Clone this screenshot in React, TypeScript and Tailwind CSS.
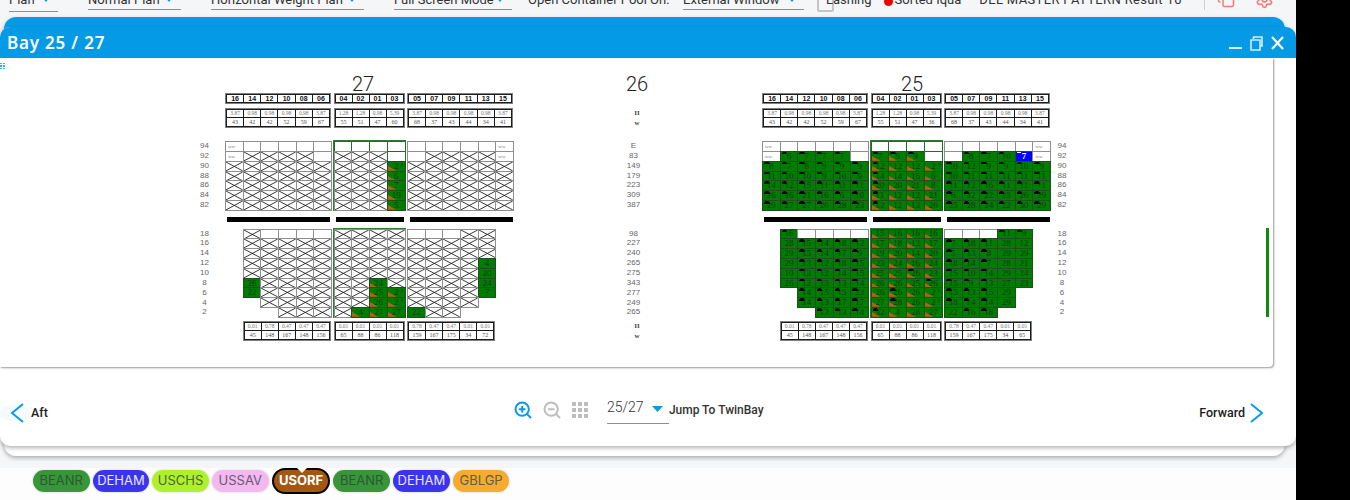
import React from 'react';
import { Copy, Settings, ZoomIn, ZoomOut } from 'lucide-react';

const roboto = 'font-["Roboto",sans-serif]';

const headers = ['16 14 12 10 08 06', '04 02 01 03', '05 07 09 11 13 15'];
const topWeights = ['3.87 0.98 0.98 0.98 0.98 3.87', '1.28 1.28 0.98 5.39', '3.87 0.98 0.98 0.98 0.98 3.87'];
const bottomWeights = ['0.01 0.78 0.47 0.47 0.47', '0.01 0.01 0.01 0.01', '0.78 0.47 0.47 0.01 0.01'];

// x = crossed, e = empty, n = no slot, w = ww, number + flags: t triangle, m mark, b blue, k corner K
const bay27 = {
  top: ['43 42 42 52 59 67', '55 51 47 60', '68 37 43 44 34 41'],
  bottom: ['45 148 167 148 156', '65 88 86 118', '159 167 175 34 72'],
  upper: [
    ['w e e e e e', 'w x x x x e', 'x x x x x x', 'x x x x x x', 'x x x x x x', 'x x x x x x', 'x x x x x x'],
    ['e e e e', 'x x x e', 'x x x 2tk', 'x x x 6t', 'x x x 7t', 'x x x 19t', 'x x x 5t'],
    ['e e e e e w', 'e x x x x w', 'x x x x x x', 'x x x x x x', 'x x x x x x', 'x x x x x x', 'x x x x x x'],
  ],
  lower: [
    ['x e e e e', 'x x x x x', 'x x x x x', 'x x x x x', 'x x x x x', '26 x x x x', '22 x x x x', 'n x x x x', 'n n x x x'],
    ['x x x x', 'x x x x', 'x x x x', 'x x x x', 'x x x x', 'x x 24t x', 'x x 25t 2tk', 'x x 26t 2tk', 'x 4t 27t 27t'],
    ['e e e x x', 'x x x x x', 'x x x x x', 'x x x x 4', 'x x x x 20', 'x x x x 24', 'x x x x 7', 'x x x x n', '22 x x n n'],
  ],
};

const bay25 = {
  top: ['43 42 42 52 59 67', '55 51 47 36', '68 37 43 44 34 41'],
  bottom: ['45 148 167 148 156', '65 88 86 118', '159 167 175 34 65'],
  upper: [
    [
      'w e e e e e',
      'w 6m 7m 7m 7m e',
      '8m 7m 8m 9m 9m 9m',
      '11m 10m 10m 9m 10m 9m',
      '14m 12m 15m 11m 11m 11m',
      '26m 26m 21m 16m 6m 10m',
      '29m 27m 27m 26m 28m 23m',
    ],
    ['e e e e', '7tm 9tm 9tm e', '12tm 12t 12t 2tk', '14tm 14t 15t 6t', '20tm 20t 21t 8t', '11tm 12t 12t 21t', '12tm 12t 13t 26t'],
    [
      'e e e e e w',
      'e 8m 7m 10m 7b w',
      '10m 12m 9m 9m 10m 9m',
      '10m 11m 11m 11m 11m 11m',
      '11m 12m 16m 11m 11m 11m',
      '6m 22m 22m 23m 26m 29m',
      '25m 28m 24m 22m 30m 29m',
    ],
  ],
  lower: [
    [
      '16m e e e e',
      '28 15m 14m 18m 12m',
      '29 15m 14m 17m 9m',
      '29 13m 12m 18m 15m',
      '10 13m 12m 14m 15m',
      '26 12m 13m 13m 14m',
      'n 14m 15m 15m 23m',
      'n 14m 13m 17m 17m',
      'n n 13m 13m 14m',
    ],
    [
      '15t 16t 16t 16t',
      '17t 18t 12t 17t',
      '19t 20t 14t 20t',
      '23t 24t 16t 24t',
      '25t 25t 26tm 23t',
      '26t 26t 25t 26tm',
      '26t 26tm 26t 2tk',
      '27t 28tm 26t 2tk',
      '32tm 4t 28t 27t',
    ],
    [
      'e e e 11m 9m',
      '7m 18m 11m 28 12',
      '5m 13m 8m 29 29',
      '18m 14m 7m 28 21',
      '15m 10m 14m 29 24',
      '15m 9m 13m 27 23',
      '15m 13m 15m 29 n',
      '18m 14m 14m 29 n',
      '22 16m 18m n n',
    ],
  ],
};

const gridCols: Record<number, string> = { 4: 'grid-cols-4', 5: 'grid-cols-5', 6: 'grid-cols-6' };
const groupWidth: Record<number, string> = { 4: 'w-[71px]', 5: 'w-[88.4px]', 6: 'w-[106px]' };

function Slot({ code, accent }: { code: string; accent: boolean }) {
  if (code === 'n') return <div />;

  if (code === 'e' || code === 'x' || code === 'w') {
    const lineColor = accent && code === 'e' ? 'border-[#1f6f24]' : 'border-[#8f8f8f]';
    return (
      <div className={`relative -mr-px -mb-px border bg-white ${lineColor}`}>
        {code === 'x' && (
          <svg className="absolute inset-0 h-full w-full" viewBox="0 0 18 10" preserveAspectRatio="none">
            <path d="M0 0 18 10M18 0 0 10" stroke="#222" strokeWidth="1" fill="none" />
          </svg>
        )}
        {code === 'w' && (
          <span className='absolute top-[1px] left-[2px] font-["Liberation_Serif",serif] text-[5px] leading-[7px] text-[#777]'>
            ww
          </span>
        )}
      </div>
    );
  }

  const value = code.replace(/[a-z]/g, '');
  const blue = code.includes('b');

  return (
    <div
      className={`relative -mr-px -mb-px flex items-center justify-center overflow-hidden border border-[#1f4f20] ${
        blue ? 'bg-[#0000ff]' : 'bg-[#007c00]'
      }`}
    >
      {code.includes('t') && (
        <svg className="absolute inset-0 h-full w-full" viewBox="0 0 18 10" preserveAspectRatio="none">
          <polygon points="0,4.5 0,10 9,10" fill="#b8600f" />
        </svg>
      )}
      {code.includes('m') && <div className="absolute top-0 left-[1px] h-[2.5px] w-[5.5px] rounded-t-full bg-black" />}
      {blue && <div className="absolute top-0 left-[1px] h-[1.5px] w-[4px] bg-white" />}
      {code.includes('k') && (
        <span className="absolute top-0 right-[1px] text-[4px] leading-[5px] text-[#0b3d0b]">K</span>
      )}
      <span
        className={`relative font-["Liberation_Serif",serif] text-[9px] leading-none ${
          blue ? 'font-bold text-white' : 'text-[#0c3a12]'
        }`}
      >
        {value}
      </span>
    </div>
  );
}

function Deck({ groups, rowHeight }: { groups: string[][]; rowHeight: string }) {
  return (
    <div className="flex gap-[2.5px]">
      {groups.map((rows, g) => {
        const count = rows[0].split(' ').length;
        return (
          <div key={g} className={`flex ${g === 0 ? 'w-[106px] justify-end' : g === 1 ? 'w-[71px]' : 'w-[106px]'}`}>
            <div className={`grid ${gridCols[count]} ${groupWidth[count]} ${g === 1 ? 'outline outline-[#2f7d32]' : ''}`}>
              {rows.flatMap((row, r) =>
                row.split(' ').map((code, c) => (
                  <div key={`${r}-${c}`} className={`flex ${rowHeight}`}>
                    <div className="flex-1 grid">
                      <Slot code={code} accent={g === 1} />
                    </div>
                  </div>
                )),
              )}
            </div>
          </div>
        );
      })}
    </div>
  );
}

function TableGroups({ rows, align, text }: { rows: string[][]; align: 'full' | 'inner'; text: string[] }) {
  return (
    <div className="flex gap-[2.5px]">
      {rows[0].map((_, g) => {
        const count = rows[0][g].split(' ').length;
        const outer = g === 0 ? 'w-[106px] justify-end' : g === 1 ? 'w-[71px]' : 'w-[106px]';
        return (
          <div key={g} className={`flex ${align === 'full' ? 'w-auto' : outer}`}>
            <div className={`grid ${gridCols[count]} ${groupWidth[count]} gap-px border border-[#808080] bg-[#1c1c1c] p-px`}>
              {rows.flatMap((row, r) =>
                row[g].split(' ').map((v, c) => (
                  <div key={`${r}-${c}`} className={`flex items-center justify-center bg-white ${text[r]}`}>
                    {v}
                  </div>
                )),
              )}
            </div>
          </div>
        );
      })}
    </div>
  );
}

function Bay({ title, data, titleClass }: { title: string; data: typeof bay27; titleClass: string }) {
  const weightText = [
    'h-[7.5px] font-["Liberation_Serif",serif] text-[5.5px] leading-none text-[#777]',
    'h-[7.5px] font-["Liberation_Serif",serif] text-[6px] leading-none text-[#555]',
  ];

  return (
    <div className="w-[288px] shrink-0">
      <div className={`h-[18px] text-center font-["Roboto",sans-serif] text-[20px] leading-[18px] font-light text-[#222] ${titleClass}`}>
        {title}
      </div>
      <TableGroups
        rows={[headers]}
        align="full"
        text={['h-[6.5px] font-["Liberation_Sans",sans-serif] text-[7px] leading-none font-bold text-[#111]']}
      />
      <div className="mt-[4px]">
        <TableGroups rows={[topWeights, data.top]} align="full" text={weightText} />
      </div>
      <div className="mt-[13.5px]">
        <Deck groups={data.upper} rowHeight="h-[9.86px]" />
      </div>
      <div className="mt-[7px] flex h-[5px] gap-[6px] pl-[1.5px]">
        <div className="w-[103px] bg-black" />
        <div className="w-[68px] bg-black" />
        <div className="w-[103.5px] bg-black" />
      </div>
      <div className="mt-[6.5px]">
        <Deck groups={data.lower} rowHeight="h-[9.83px]" />
      </div>
      <div className="mt-[4px]">
        <TableGroups rows={[bottomWeights, data.bottom]} align="inner" text={weightText} />
      </div>
    </div>
  );
}

function Axis({
  title,
  upper,
  lower,
  center,
}: {
  title?: string;
  upper: string[];
  lower: string[];
  center?: boolean;
}) {
  const label = `h-[9.86px] text-center font-["Liberation_Sans",sans-serif] text-[8px] leading-[9.86px] text-[#666] ${
    center ? 'pr-[7px]' : ''
  }`;
  const weight = 'h-[10px] text-center font-["Liberation_Serif",serif] text-[7px] leading-[10px] font-bold text-[#444]';

  return (
    <div className={center ? 'w-[34px]' : 'w-[9px]'}>
      <div className={`h-[18px] text-center ${roboto} text-[20px] leading-[18px] font-light text-[#222]`}>{title}</div>
      <div className="mt-[14.5px] h-[20px]">
        {center && (
          <>
            <div className={weight}>II</div>
            <div className={weight}>w</div>
          </>
        )}
      </div>
      <div className="mt-[13.5px]">
        {upper.map((v, i) => (
          <div key={i} className={label}>
            {v}
          </div>
        ))}
      </div>
      <div className="mt-[18.5px]">
        {lower.map((v, i) => (
          <div key={i} className={label}>
            {v}
          </div>
        ))}
      </div>
      <div className="mt-[4px]">
        {center && (
          <>
            <div className={weight}>II</div>
            <div className={weight}>w</div>
          </>
        )}
      </div>
    </div>
  );
}

function ToolbarSelect({ label, className }: { label: string; className: string }) {
  return (
    <div className={`flex h-[19px] shrink-0 items-start justify-between border-b border-[#8e8e8e] pr-[8px] ${className}`}>
      <span className="whitespace-nowrap">{label}</span>
      <svg width="8" height="5" viewBox="0 0 8 5" className="mt-[6px]">
        <polygon points="0,0 8,0 4,5" fill="#0a9be8" />
      </svg>
    </div>
  );
}

function Toolbar() {
  return (
    <div className={`h-[17px] overflow-hidden bg-[#f5f6f8] ${roboto} text-[13px] leading-[18px] text-[#333]`}>
      <div className="-mt-[9px] flex items-start">
        <ToolbarSelect label="Plan" className="ml-[9px] h-[21px] w-[49px]" />
        <ToolbarSelect label="Normal Plan" className="ml-[30px] w-[93px]" />
        <ToolbarSelect label="Horizontal Weight Plan" className="ml-[30px] w-[153px]" />
        <ToolbarSelect label="Full Screen Mode" className="ml-[30px] w-[118px]" />
        <span className="ml-[16px] w-[155px] shrink-0 whitespace-nowrap">Open Container Pool On:</span>
        <ToolbarSelect label="External Window" className="w-[121px]" />
        <div className="mt-[1px] ml-[13px] h-[20px] w-[17px] shrink-0 rounded-[2px] border-2 border-[#c4c4c4]" />
        <span className="-ml-[8px] whitespace-nowrap">Lashing</span>
        <div className="mt-[6px] ml-[12px] h-[9px] w-[9px] shrink-0 rounded-full bg-[#f00000]" />
        <span className="ml-[2px] whitespace-nowrap">Sorted Iqua</span>
        <span className="ml-[18px] whitespace-nowrap tracking-[0.35px]">DEL MASTER PATTERN Result 10</span>
        <div className="ml-[22px] h-[19px] w-px shrink-0 bg-[#d0d0d0]" />
        <Copy className="mt-[-1px] ml-[12px] shrink-0 text-[#f07c74]" size={18} />
        <Settings className="mt-[-1px] ml-[20px] shrink-0 text-[#f07c74]" size={19} />
      </div>
    </div>
  );
}

function BayViewer() {
  return (
    <div className="relative flex h-[309px] w-[1273px] rounded-br-[4px] bg-white pt-[17px] pl-[200px] shadow-[1px_1px_2px_rgba(0,0,0,0.4)]">
      <div className="absolute top-[5px] left-0 grid h-[6px] w-[5px] grid-cols-2 gap-px">
        {[0, 1, 2, 3, 4, 5].map((i) => (
          <div key={i} className="bg-[#4aa9e6]" />
        ))}
      </div>

      <Axis upper={['94', '92', '90', '88', '86', '84', '82']} lower={['18', '16', '14', '12', '10', '8', '6', '4', '2']} />
      <div className="ml-[16px]">
        <Bay title="27" data={bay27} titleClass="pr-[12px]" />
      </div>
      <div className="ml-[107px]">
        <Axis
          center
          title="26"
          upper={['E', '83', '149', '179', '223', '309', '387']}
          lower={['98', '227', '240', '265', '275', '343', '277', '249', '265']}
        />
      </div>
      <div className="ml-[108px]">
        <Bay title="25" data={bay25} titleClass="pl-[12px]" />
      </div>
      <div className="ml-[7.5px]">
        <Axis upper={['94', '92', '90', '88', '86', '84', '82']} lower={['18', '16', '14', '12', '10', '8', '6', '4', '2']} />
      </div>

      <div className="absolute top-[170px] right-[4px] h-[89px] w-[3.5px] bg-[#128a12]" />
    </div>
  );
}

function NavBar() {
  return (
    <div className={`flex h-[79px] items-center pt-[13px] pr-[32px] ${roboto} text-[12.5px] font-medium text-[#222]`}>
      <div className="flex h-[18px] w-[30px] items-center rounded-[50%] bg-[#f5fafe] pl-[10px]">
        <svg width="14" height="20" viewBox="0 0 14 20" className="shrink-0">
          <path d="M13 1 2 10l11 9" stroke="#0a9be8" strokeWidth="2" fill="none" />
        </svg>
      </div>
      <span className="ml-[1px]">Aft</span>

      <ZoomIn className="-mt-[6px] ml-[465px] text-[#0a9be8]" size={20} strokeWidth={2.4} />
      <ZoomOut className="-mt-[6px] ml-[9px] text-[#bdbdbd]" size={20} strokeWidth={2.4} />
      <div className="-mt-[6px] ml-[10px] grid h-[16px] w-[16px] grid-cols-3 gap-[2px]">
        {[0, 1, 2, 3, 4, 5, 6, 7, 8].map((i) => (
          <div key={i} className="bg-[#bdbdbd]" />
        ))}
      </div>
      <div className="-mt-[10px] ml-[19px] flex h-[31px] w-[62px] items-center justify-between border-b border-[#8e8e8e] pr-[6px] pb-[1px] text-[14px] font-light text-[#333]">
        <span>25/27</span>
        <svg width="11" height="6" viewBox="0 0 11 6" className="mt-[3px]">
          <polygon points="0,0 11,0 5.5,6" fill="#0a9be8" />
        </svg>
      </div>
      <span className="-mt-[6px] text-[12px] text-[#333]">Jump To TwinBay</span>

      <span className="ml-auto">Forward</span>
      <svg width="14" height="20" viewBox="0 0 14 20" className="ml-[5px] shrink-0">
        <path d="M1 1l11 9-11 9" stroke="#0a9be8" strokeWidth="2" fill="none" />
      </svg>
    </div>
  );
}

const ports = [
  { name: 'BEANR', color: 'bg-[#38953a] text-[#2c5a30]' },
  { name: 'DEHAM', color: 'bg-[#3a34f0] text-[#e8e8ff]' },
  { name: 'USCHS', color: 'bg-[#aef02a] text-[#4c6a30]' },
  { name: 'USSAV', color: 'bg-[#f3b8f0] text-[#6a5a70]' },
  { name: 'USORF', color: 'bg-[#a5570f] text-white font-bold', active: true },
  { name: 'BEANR', color: 'bg-[#38953a] text-[#2c5a30]' },
  { name: 'DEHAM', color: 'bg-[#3a34f0] text-[#e8e8ff]' },
  { name: 'GBLGP', color: 'bg-[#f4ab30] text-[#6a5a40]' },
];

function PortStrip() {
  return (
    <div className={`flex h-[32px] items-start gap-[3.2px] bg-[#fdfdfd] pt-[2px] pl-[33px] font-["Inter",sans-serif] text-[13px]`}>
      {ports.map((port, i) => (
        <div
          key={i}
          className={`relative flex h-[22px] w-[56.5px] items-center justify-center rounded-full ${port.color} ${
            port.active ? '-my-[2px] h-[26px] w-[58.5px] border-2 border-black' : 'shadow-[0_0_0_1.5px_#f0f0f0]'
          }`}
        >
          {port.active && (
            <div className="absolute -top-[2px] left-[23px] h-0 w-0 border-x-[5px] border-t-[5px] border-x-transparent border-t-white" />
          )}
          {port.name}
        </div>
      ))}
    </div>
  );
}

export default function App() {
  return (
    <div className="flex h-[500px] w-[1350px] overflow-hidden bg-black">
      <div className="w-[1296px]">
        <Toolbar />
        <div className="relative h-[451px] bg-[#f5f6f8]">
          {/* Dialog behind the active one */}
          <div className="absolute top-0 left-[4px] h-[439px] w-[1281px] overflow-hidden rounded-[12px] bg-white shadow-[0_2px_4px_rgba(0,0,0,0.3)]">
            <div className='flex h-[12px] gap-[52px] bg-[#059ae6] pl-[27px] font-["Inter",sans-serif] text-[14px] leading-[28px] font-bold text-white'>
              <span className="pt-[4px]">ll</span>
              <span className="pt-[4px]">i</span>
            </div>
          </div>

          <div className="relative top-[10px] h-[419px] rounded-[10px] bg-white shadow-[0_2px_4px_rgba(0,0,0,0.3)]">
            <div className="flex h-[31px] items-center justify-between rounded-t-[10px] bg-[#059ae6] pr-[12px] pl-[7px] text-white">
              <span className='font-["Noto_Sans",sans-serif] text-[17px] font-semibold tracking-[0.8px]'>Bay 25 / 27</span>
              <div className="flex items-center gap-[8px]">
                <div className="mt-[10px] h-[2px] w-[13px] bg-[#d5eefc]" />
                <svg width="13" height="15" viewBox="0 0 13 15" className="mt-[1px]">
                  <path d="M3.5 3V1h8.5v9h-2M1 4h9v10H1z" stroke="#d5eefc" strokeWidth="1.6" fill="none" />
                </svg>
                <svg width="13" height="14" viewBox="0 0 13 14">
                  <path d="M1 1l11 12M12 1 1 13" stroke="#fff" strokeWidth="2.2" fill="none" />
                </svg>
              </div>
            </div>
            <BayViewer />
            <NavBar />
          </div>
        </div>
        <PortStrip />
      </div>
    </div>
  );
}
